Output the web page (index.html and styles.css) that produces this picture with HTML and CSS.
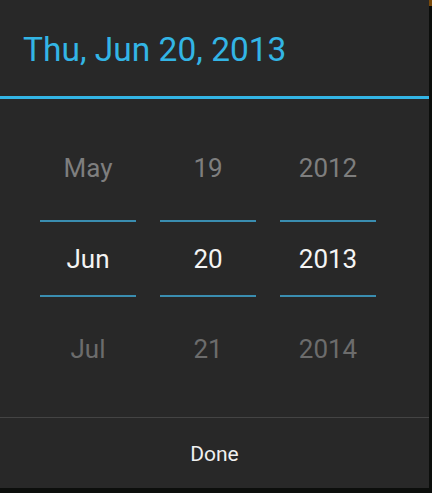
FILE: index.html
```html
<!DOCTYPE html>
<html lang="en">
<head>
<meta charset="utf-8">
<title>Date picker</title>
<link rel="stylesheet" href="styles.css">
</head>
<body>
<div class="dialog">
  <header class="title">Thu, Jun 20, 2013</header>
  <div class="title-rule"></div>
  <div class="picker">
    <div class="column">
      <div class="cell dim-top">May</div>
      <div class="spacer"></div>
      <div class="rule"></div>
      <div class="cell selected">Jun</div>
      <div class="rule"></div>
      <div class="spacer2"></div>
      <div class="cell dim-bottom">Jul</div>
    </div>
    <div class="column">
      <div class="cell dim-top">19</div>
      <div class="spacer"></div>
      <div class="rule"></div>
      <div class="cell selected">20</div>
      <div class="rule"></div>
      <div class="spacer2"></div>
      <div class="cell dim-bottom">21</div>
    </div>
    <div class="column">
      <div class="cell dim-top">2012</div>
      <div class="spacer"></div>
      <div class="rule"></div>
      <div class="cell selected">2013</div>
      <div class="rule"></div>
      <div class="spacer2"></div>
      <div class="cell dim-bottom">2014</div>
    </div>
  </div>
  <div class="footer">
    <button class="done">Done</button>
  </div>
</div>
</body>
</html>
```

FILE: styles.css
```css
html, body {
  margin: 0;
  padding: 0;
}
body {
  width: 432px;
  height: 493px;
  background: linear-gradient(to bottom, #7a4a0c 0, #7a4a0c 6px, #0c0e0c 6px, #0c0e0c 100%);
  font-family: Roboto, "Liberation Sans", sans-serif;
  overflow: hidden;
}
.dialog {
  width: 429px;
  height: 488px;
  background: #282828;
  display: flex;
  flex-direction: column;
}
.title {
  height: 96px;
  box-sizing: border-box;
  padding-left: 23px;
  padding-top: 3px;
  display: flex;
  align-items: center;
  color: #33b5e5;
  font-size: 33.5px;
}
.title-rule {
  height: 3px;
  background: #33b5e5;
}
.picker {
  display: flex;
  gap: 24px;
  padding-left: 40px;
  padding-top: 32px;
  height: 318px;
  box-sizing: border-box;
}
.column {
  width: 96px;
  display: flex;
  flex-direction: column;
}
.cell {
  height: 73px;
  display: flex;
  align-items: center;
  justify-content: center;
  font-size: 26px;
}
.spacer {
  height: 16px;
}
.spacer2 {
  height: 15px;
}
.rule {
  height: 2px;
  background: #3a8db0;
}
.dim-top {
  color: #7e7e7e;
}
.dim-bottom {
  color: #6c6c6c;
}
.selected {
  color: #f4f4f4;
}
.footer {
  border-top: 1px solid #444444;
  flex: 1;
  display: flex;
  align-items: center;
  justify-content: center;
}
.done {
  background: none;
  border: none;
  color: #f0f0f0;
  font-family: Roboto, "Liberation Sans", sans-serif;
  font-size: 21px;
  padding: 0;
  margin-top: 2px;
}
```
